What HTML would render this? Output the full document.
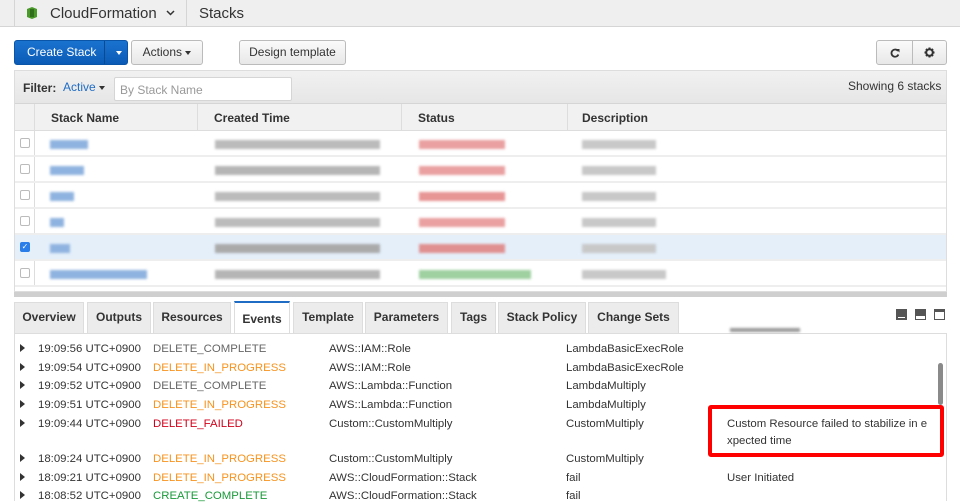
<!DOCTYPE html>
<html><head><meta charset="utf-8"><style>
*{box-sizing:border-box;margin:0;padding:0}
body{width:960px;height:501px;overflow:hidden;background:#fff;font-family:"Liberation Sans",Arial,sans-serif;font-size:12px;color:#333;position:relative}
.a{position:absolute}
.top{left:0;top:0;width:960px;height:27px;background:#efefef;border-bottom:1px solid #d5d5d5}
.btn{position:absolute;height:25px;border:1px solid #bbb;border-radius:3px;background:linear-gradient(#fafafa,#e8e8e8);font-size:12px;line-height:23px;text-align:center;color:#333}
.blur{position:absolute;height:9px;filter:blur(1.3px)}
.hd{font-weight:bold;font-size:12px;color:#333}
.row{position:absolute;left:15px;width:931px;height:26px;border-bottom:2px solid #eee}
.cb{position:absolute;left:5px;top:7px;width:10px;height:10px;border:1px solid #bbb;border-radius:2px;background:#fff}
.tab{position:absolute;top:302px;height:31px;background:#ececec;border:1px solid #ddd;border-bottom:none;font-weight:bold;font-size:12px;line-height:29px;text-align:center;color:#333}
.ev{position:absolute;font-size:11.4px;color:#333;white-space:nowrap;margin-top:2px}
.tri{position:absolute;left:20px;width:0;height:0;border-left:5px solid #333;border-top:4px solid transparent;border-bottom:4px solid transparent}
</style></head><body>
<div class="a top"></div>
<div class="a" style="left:14px;top:0;width:1px;height:27px;background:#d5d5d5"></div>
<div class="a" style="left:186px;top:0;width:1px;height:27px;background:#d5d5d5"></div>
<svg class="a" style="left:26px;top:6px" width="12" height="14" viewBox="0 0 12 14"><path d="M1 3 L6 1 L11 3 V11 L6 13 L1 11Z" fill="#4a9a2a"/><rect x="4" y="3" width="4" height="8" fill="#2f6e1a"/></svg>
<div class="a" style="left:50px;top:5px;font-size:15px;color:#333">CloudFormation</div>
<svg class="a" style="left:166px;top:10px" width="9" height="6"><path d="M1 1 L4.5 4.5 L8 1" stroke="#333" stroke-width="1.5" fill="none"/></svg>
<div class="a" style="left:199px;top:5px;font-size:15px;color:#333">Stacks</div>

<div class="btn" style="left:14px;top:40px;width:114px;background:linear-gradient(#1a73d0,#0b5bb5);border-color:#0b55a8;color:#fff"><span style="position:absolute;left:12px">Create Stack</span><span style="position:absolute;left:89px;top:0;width:1px;height:23px;background:#0a4a93"></span><span style="position:absolute;left:101px;top:10px;border-left:3.5px solid transparent;border-right:3.5px solid transparent;border-top:4px solid #fff"></span></div>
<div class="btn" style="left:131px;top:40px;width:72px">Actions <span style="display:inline-block;vertical-align:middle;border-left:3.5px solid transparent;border-right:3.5px solid transparent;border-top:4px solid #333"></span></div>
<div class="btn" style="left:239px;top:40px;width:107px">Design template</div>
<div class="btn" style="left:876px;top:40px;width:71px">
<svg style="position:absolute;left:13px;top:7px" width="10" height="10" viewBox="0 0 10 10"><path d="M8 3 A3.6 3.6 0 1 0 8.4 6.5" stroke="#333" stroke-width="1.8" fill="none"/><path d="M6 1 L9.5 1 L9.5 4.5Z" fill="#333"/></svg>
<span style="position:absolute;left:35px;top:0;width:1px;height:23px;background:#bbb"></span>
<svg style="position:absolute;left:47px;top:6px" width="11" height="11" viewBox="0 0 11 11"><circle cx="5.5" cy="5.5" r="3.3" fill="none" stroke="#333" stroke-width="2"/><g stroke="#333" stroke-width="2"><path d="M5.5 0.5V2.5M5.5 8.5V10.5M0.5 5.5H2.5M8.5 5.5H10.5M2 2L3.3 3.3M7.7 7.7L9 9M9 2L7.7 3.3M3.3 7.7L2 9"/></g></svg>
</div>

<div class="a" style="left:14px;top:70px;width:933px;height:222px;border:1px solid #ddd;background:#fff"></div>
<div class="a" style="left:15px;top:71px;width:931px;height:33px;background:linear-gradient(#f1f1f1,#e6e6e6);border-bottom:1px solid #d5d5d5"></div>
<div class="a" style="left:23px;top:81px;font-weight:bold">Filter:</div>
<div class="a" style="left:63px;top:80px;color:#1f6cc5">Active <span style="display:inline-block;vertical-align:middle;border-left:3.5px solid transparent;border-right:3.5px solid transparent;border-top:4px solid #333"></span></div>
<div class="a" style="left:114px;top:77px;width:178px;height:24px;background:#fff;border:1px solid #d5d5d5;border-radius:2px;color:#999;padding:5px 5px;font-size:12px">By Stack Name</div>
<div class="a" style="left:848px;top:79px;color:#333">Showing 6 stacks</div>
<div class="a" style="left:15px;top:104px;width:931px;height:27px;background:#f1f1f1;border-bottom:1px solid #ddd"></div>
<div class="a" style="left:34px;top:104px;width:1px;height:182px;background:#ddd"></div>
<div class="a" style="left:197px;top:104px;width:1px;height:27px;background:#ddd"></div>
<div class="a" style="left:401px;top:104px;width:1px;height:27px;background:#ddd"></div>
<div class="a" style="left:567px;top:104px;width:1px;height:27px;background:#ddd"></div>
<div class="a hd" style="left:51px;top:111px">Stack Name</div>
<div class="a hd" style="left:214px;top:111px">Created Time</div>
<div class="a hd" style="left:418px;top:111px">Status</div>
<div class="a hd" style="left:582px;top:111px">Description</div>

<div class="row" style="top:131px"><div class="cb"></div><div class="blur" style="left:35px;top:9px;width:38px;background:#8fb3e0"></div><div class="blur" style="left:200px;top:9px;width:165px;background:#bbb"></div><div class="blur" style="left:404px;top:9px;width:86px;background:#eaa0a0"></div><div class="blur" style="left:567px;top:9px;width:74px;background:#c8c8c8"></div></div>
<div class="row" style="top:157px"><div class="cb"></div><div class="blur" style="left:35px;top:9px;width:34px;background:#8fb3e0"></div><div class="blur" style="left:200px;top:9px;width:165px;background:#b5b5b5"></div><div class="blur" style="left:404px;top:9px;width:86px;background:#eaa0a0"></div><div class="blur" style="left:567px;top:9px;width:74px;background:#c8c8c8"></div></div>
<div class="row" style="top:183px"><div class="cb"></div><div class="blur" style="left:35px;top:9px;width:24px;background:#8fb3e0"></div><div class="blur" style="left:200px;top:9px;width:165px;background:#bbb"></div><div class="blur" style="left:404px;top:9px;width:86px;background:#e89595"></div><div class="blur" style="left:567px;top:9px;width:74px;background:#c8c8c8"></div></div>
<div class="row" style="top:209px"><div class="cb"></div><div class="blur" style="left:35px;top:9px;width:14px;background:#8fb3e0"></div><div class="blur" style="left:200px;top:9px;width:165px;background:#bbb"></div><div class="blur" style="left:404px;top:9px;width:86px;background:#eaa0a0"></div><div class="blur" style="left:567px;top:9px;width:74px;background:#c8c8c8"></div></div>
<div class="row" style="top:235px;background:#e4effa"><div class="cb" style="background:#2b7de9;border-color:#2b7de9;color:#fff;font-size:8px;line-height:8px;text-align:center">✓</div><div class="blur" style="left:35px;top:9px;width:20px;background:#8fb3e0"></div><div class="blur" style="left:200px;top:9px;width:165px;background:#aaa"></div><div class="blur" style="left:404px;top:9px;width:86px;background:#e09090"></div><div class="blur" style="left:567px;top:9px;width:74px;background:#c8c8c8"></div></div>
<div class="row" style="top:261px"><div class="cb"></div><div class="blur" style="left:35px;top:9px;width:97px;background:#8fb3e0"></div><div class="blur" style="left:200px;top:9px;width:165px;background:#b5b5b5"></div><div class="blur" style="left:404px;top:9px;width:112px;background:#9fd0a0"></div><div class="blur" style="left:567px;top:9px;width:84px;background:#c8c8c8"></div></div>
<div class="a" style="left:14px;top:292px;width:933px;height:5px;background:#cfcfcf"></div>

<div class="tab" style="left:14px;width:70px">Overview</div>
<div class="tab" style="left:87px;width:64px">Outputs</div>
<div class="tab" style="left:153px;width:78px">Resources</div>
<div class="tab" style="left:234px;top:301px;width:56px;height:33px;background:#fff;border-top:2px solid #1f6cc5;line-height:33px">Events</div>
<div class="tab" style="left:293px;width:70px">Template</div>
<div class="tab" style="left:365px;width:83px">Parameters</div>
<div class="tab" style="left:451px;width:45px">Tags</div>
<div class="tab" style="left:498px;width:88px">Stack Policy</div>
<div class="tab" style="left:588px;width:91px">Change Sets</div>
<div class="a" style="left:896px;top:309px;width:11px;height:11px;background:#555"><div style="position:absolute;left:2px;bottom:2px;width:7px;height:1px;background:#fff"></div></div>
<div class="a" style="left:915px;top:309px;width:11px;height:11px;background:#555"><div style="position:absolute;left:1px;bottom:1px;width:9px;height:3px;background:#fff"></div></div>
<div class="a" style="left:934px;top:309px;width:11px;height:11px;background:#fff;border:1px solid #555;border-top:3px solid #555"></div>
<div class="a" style="left:14px;top:333px;width:933px;height:168px;border:1px solid #ddd;border-bottom:none"></div>
<div class="a" style="left:15px;top:333px;width:219px;height:1px;background:#ddd"></div>
<div class="a" style="left:290px;top:333px;width:656px;height:1px;background:#ddd"></div>
<div class="blur" style="left:730px;top:328px;width:70px;height:4px;background:#999"></div>
<div class="a" style="left:938px;top:363px;width:5px;height:42px;border-radius:3px;background:#8a8a8a"></div>

<div class="tri" style="top:344px"></div><div class="ev" style="left:38px;top:341px">19:09:56 UTC+0900</div><div class="ev" style="left:153px;top:341px;color:#666">DELETE_COMPLETE</div><div class="ev" style="left:329px;top:341px">AWS::IAM::Role</div><div class="ev" style="left:566px;top:341px">LambdaBasicExecRole</div>
<div class="tri" style="top:363px"></div><div class="ev" style="left:38px;top:360px">19:09:54 UTC+0900</div><div class="ev" style="left:153px;top:360px;color:#f7931e">DELETE_IN_PROGRESS</div><div class="ev" style="left:329px;top:360px">AWS::IAM::Role</div><div class="ev" style="left:566px;top:360px">LambdaBasicExecRole</div>
<div class="tri" style="top:381px"></div><div class="ev" style="left:38px;top:378px">19:09:52 UTC+0900</div><div class="ev" style="left:153px;top:378px;color:#666">DELETE_COMPLETE</div><div class="ev" style="left:329px;top:378px">AWS::Lambda::Function</div><div class="ev" style="left:566px;top:378px">LambdaMultiply</div>
<div class="tri" style="top:400px"></div><div class="ev" style="left:38px;top:397px">19:09:51 UTC+0900</div><div class="ev" style="left:153px;top:397px;color:#f7931e">DELETE_IN_PROGRESS</div><div class="ev" style="left:329px;top:397px">AWS::Lambda::Function</div><div class="ev" style="left:566px;top:397px">LambdaMultiply</div>
<div class="tri" style="top:419px"></div><div class="ev" style="left:38px;top:416px">19:09:44 UTC+0900</div><div class="ev" style="left:153px;top:416px;color:#d0021b">DELETE_FAILED</div><div class="ev" style="left:329px;top:416px">Custom::CustomMultiply</div><div class="ev" style="left:566px;top:416px">CustomMultiply</div>
<div class="ev" style="left:727px;top:414px;line-height:17px">Custom Resource failed to stabilize in e<br>xpected time</div>
<div class="a" style="left:708px;top:405px;width:236px;height:52px;border:4px solid #ff0000;border-radius:3px"></div>
<div class="tri" style="top:454px"></div><div class="ev" style="left:38px;top:451px">18:09:24 UTC+0900</div><div class="ev" style="left:153px;top:451px;color:#f7931e">DELETE_IN_PROGRESS</div><div class="ev" style="left:329px;top:451px">Custom::CustomMultiply</div><div class="ev" style="left:566px;top:451px">CustomMultiply</div>
<div class="tri" style="top:473px"></div><div class="ev" style="left:38px;top:470px">18:09:21 UTC+0900</div><div class="ev" style="left:153px;top:470px;color:#f7931e">DELETE_IN_PROGRESS</div><div class="ev" style="left:329px;top:470px">AWS::CloudFormation::Stack</div><div class="ev" style="left:566px;top:470px">fail</div><div class="ev" style="left:727px;top:470px">User Initiated</div>
<div class="tri" style="top:491px"></div><div class="ev" style="left:38px;top:488px">18:08:52 UTC+0900</div><div class="ev" style="left:153px;top:488px;color:#1a9a3a">CREATE_COMPLETE</div><div class="ev" style="left:329px;top:488px">AWS::CloudFormation::Stack</div><div class="ev" style="left:566px;top:488px">fail</div>
</body></html>
